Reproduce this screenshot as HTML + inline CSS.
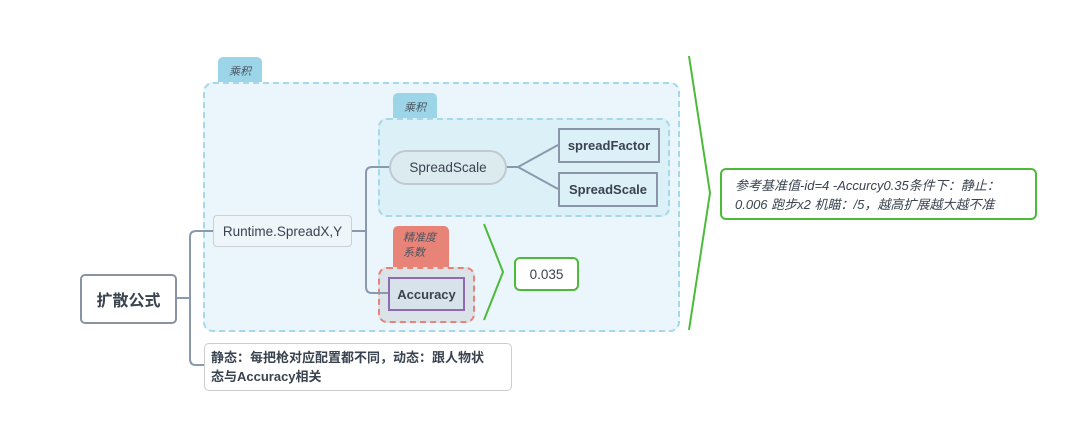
<!DOCTYPE html>
<html><head><meta charset="utf-8"><style>
body{margin:0;width:1068px;height:425px;background:#fff;position:relative;overflow:hidden;font-family:"Liberation Sans","Noto Sans CJK SC",sans-serif;color:#3a4350}
.a{position:absolute;box-sizing:border-box}
.c{display:flex;align-items:center;justify-content:center}
.tab{font-style:italic;font-size:11px;color:#4a5560;text-align:center}
</style></head><body>
<div class="a" style="left:218px;top:57px;width:44px;height:27px;background:#9cd4e8;border-radius:5px 5px 0 0"><div class="tab" style="padding-top:6px">乘积</div></div>
<div class="a" style="left:203px;top:82px;width:477px;height:250px;background:#eaf6fb;border:2px dashed #a6d8ea;border-radius:10px"></div>
<div class="a" style="left:393px;top:93px;width:44px;height:27px;background:#9cd4e8;border-radius:5px 5px 0 0"><div class="tab" style="padding-top:6px">乘积</div></div>
<div class="a" style="left:378px;top:118px;width:292px;height:99px;background:#dcf0f7;border:2px dashed #a6d8ea;border-radius:9px"></div>
<div class="a" style="left:393px;top:226px;width:56px;height:44px;background:#e88378;border-radius:5px 5px 0 0"><div class="tab" style="padding:5px 0 0 10px;text-align:left;line-height:15px">精准度<br>系数</div></div>
<div class="a" style="left:378px;top:267px;width:97px;height:56px;background:#dbe3e8;border:2px dashed #e88378;border-radius:9px"></div>
<svg class="a" style="left:0;top:0" width="1068" height="425">
<g fill="none" stroke="#8a99ae" stroke-width="2">
<path d="M177 298H190M213 231H196Q190 231 190 237V359Q190 365 196 365H204"/>
<path d="M352 231H366M389 167H372Q366 167 366 173V287Q366 293 372 293H388"/>
<path d="M506 167H518L558 145M518 167L558 189"/>
</g>
<g fill="none" stroke="#4cbb3a" stroke-width="2">
<path d="M484 224L503 272L484 320"/>
<path d="M689 56L710 193L689 330"/>
</g></svg>
<div class="a c" style="left:80px;top:274px;width:97px;height:50px;border:2px solid #8a93a3;border-radius:5px;background:#fff;font-weight:bold;font-size:16px">扩散公式</div>
<div class="a c" style="left:213px;top:215px;width:139px;height:32px;border:1px solid #c8d0d8;border-radius:4px;background:#eef6fa;font-size:13.5px">Runtime.SpreadX,Y</div>
<div class="a c" style="left:389px;top:150px;width:118px;height:35px;border:2px solid #c2c8d0;border-radius:18px;background:#dcebf0;font-size:13.5px">SpreadScale</div>
<div class="a c" style="left:558px;top:128px;width:102px;height:35px;border:2px solid #8a96a8;background:#dcf0f7;font-size:13px;font-weight:bold">spreadFactor</div>
<div class="a c" style="left:558px;top:172px;width:100px;height:35px;border:2px solid #8a96a8;background:#dcf0f7;font-size:13px;font-weight:bold">SpreadScale</div>
<div class="a c" style="left:388px;top:277px;width:77px;height:34px;border:2px solid #8d6bb0;background:#d7e2ea;font-size:13px;font-weight:bold">Accuracy</div>
<div class="a c" style="left:514px;top:257px;width:65px;height:34px;border:2px solid #4cbb3a;border-radius:6px;background:#fff;font-size:13.5px">0.035</div>
<div class="a" style="left:720px;top:168px;width:317px;height:52px;border:2px solid #4cbb3a;border-radius:6px;background:#fff;font-size:13px;font-style:italic;line-height:19px;padding:6px 0 0 13px">参考基准值-id=4 -Accurcy0.35条件下：静止：<br>0.006 跑步x2 机瞄：/5，越高扩展越大越不准</div>
<div class="a" style="left:204px;top:343px;width:308px;height:48px;border:1px solid #ccc;border-radius:5px;background:#fff;font-size:13px;font-weight:bold;line-height:19px;padding:4px 0 0 6px">静态：每把枪对应配置都不同，动态：跟人物状<br>态与Accuracy相关</div>
</body></html>
